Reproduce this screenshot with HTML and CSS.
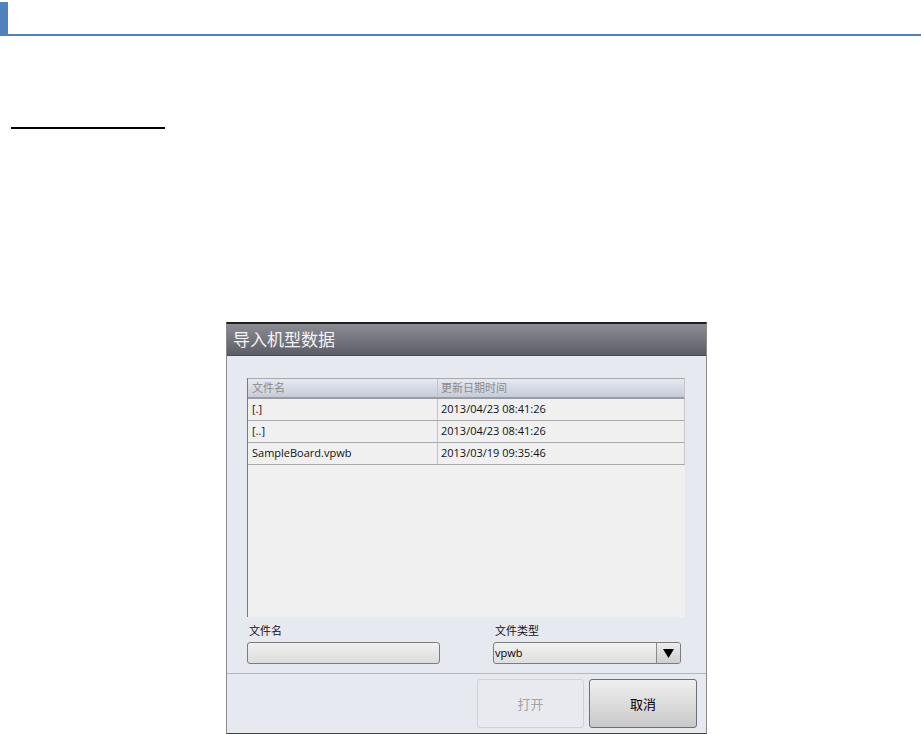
FILE: index.html
```html
<!DOCTYPE html>
<html>
<head>
<meta charset="utf-8">
<link rel="stylesheet" href="styles.css">
</head>
<body>
<div class="topbar"><div class="topbar-mark"></div></div>
<div class="heading-rule"></div>
<div class="dialog">
  <div class="dlg-title">导入机型数据</div>
  <div class="dlg-body">
    <div class="filelist">
      <div class="row head">
        <div class="cell c1">文件名</div>
        <div class="cell c2">更新日期时间</div>
      </div>
      <div class="row">
        <div class="cell c1">[.]</div>
        <div class="cell c2">2013/04/23 08:41:26</div>
      </div>
      <div class="row">
        <div class="cell c1">[..]</div>
        <div class="cell c2">2013/04/23 08:41:26</div>
      </div>
      <div class="row">
        <div class="cell c1">SampleBoard.vpwb</div>
        <div class="cell c2">2013/03/19 09:35:46</div>
      </div>
    </div>
    <div class="fields">
      <div class="field f-name">
        <div class="label">文件名</div>
        <div class="textbox"></div>
      </div>
      <div class="field f-type">
        <div class="label">文件类型</div>
        <div class="select">
          <div class="select-value">vpwb</div>
          <div class="select-btn"><svg width="11" height="9" viewBox="0 0 11 9"><path d="M0 0 H11 L5.5 9 Z" fill="#000"/></svg></div>
        </div>
      </div>
    </div>
  </div>
  <div class="dlg-footer">
    <div class="btn disabled">打开</div>
    <div class="btn">取消</div>
  </div>
</div>
</body>
</html>
```
FILE: styles.css
```css
html, body {
  margin: 0;
  padding: 0;
  background: #ffffff;
  font-family: "Open Sans", "Noto Sans CJK SC", sans-serif;
}
.topbar {
  height: 36px;
  padding-top: 2px;
  box-sizing: border-box;
  border-bottom: 2px solid #4f81bd;
}
.topbar-mark {
  width: 8px;
  height: 32px;
  background: #4f81bd;
}
.heading-rule {
  margin-left: 11px;
  margin-top: 91px;
  width: 154px;
  height: 2px;
  background: #000;
}
.dialog {
  margin-left: 226px;
  margin-top: 193px;
  width: 481px;
  height: 412px;
  box-sizing: border-box;
  border: 1px solid #8a8a8a;
  border-top: 2px solid #202020;
  border-bottom: 1px solid #404040;
  background: #e7e9f1;
  display: flex;
  flex-direction: column;
}
.dlg-title {
  height: 32px;
  box-sizing: border-box;
  background: linear-gradient(#8c8c94, #5c5d66);
  border-bottom: 1px solid #4a4a52;
  color: #f4f4f6;
  font-size: 17px;
  line-height: 31px;
  padding-left: 6px;
}
.dlg-body {
  padding: 22px 24px 0 20px;
  flex: 1;
  display: flex;
  flex-direction: column;
}
.filelist {
  width: 438px;
  height: 239px;
  background: #f0f0f0;
  border-left: 1px solid #7a7a7a;
  box-sizing: border-box;
  font-size: 11px;
}
.row {
  display: flex;
  height: 22px;
  box-sizing: border-box;
  border-bottom: 1px solid #a8a8a8;
  border-right: 1px solid #c8c8c8;
  color: #111;
}
.row.head {
  height: 21px;
  border-top: 1px solid #a8a8a8;
  border-bottom: 2px solid #9a9ca4;
  background: linear-gradient(#e6e9f2, #c6cbd9);
  color: #8a8a8a;
}
.cell {
  line-height: 20px;
  padding-left: 4px;
  box-sizing: border-box;
  white-space: nowrap;
}
.row.head .cell { line-height: 18px; }
.c1 {
  width: 190px;
  border-right: 1px solid #c4c4c4;
}
.c2 { flex: 1; padding-left: 3px; }
.fields {
  display: flex;
  margin-top: 2px;
}
.field { display: flex; flex-direction: column; }
.f-name { width: 193px; }
.f-type { margin-left: 53px; width: 188px; }
.label {
  font-size: 11px;
  height: 23px;
  line-height: 24px;
  color: #111;
  padding-left: 2px;
}
.textbox {
  height: 22px;
  box-sizing: border-box;
  border: 1px solid #7c7c7c;
  border-radius: 3px;
  background: linear-gradient(#f0f0f0, #dcdcdc);
}
.select {
  height: 22px;
  box-sizing: border-box;
  border: 1px solid #7c7c7c;
  border-radius: 3px;
  background: linear-gradient(#f2f2f2, #dedede);
  display: flex;
}
.select-value {
  flex: 1;
  font-size: 11px;
  line-height: 19px;
  padding-left: 1px;
  color: #000;
}
.select-btn {
  width: 23px;
  border-left: 1px solid #8a8a8a;
  display: flex;
  align-items: center;
  justify-content: center;
  background: linear-gradient(#ececec, #cfcfcf);
  border-radius: 0 2px 2px 0;
}
.dlg-footer {
  height: 60px;
  box-sizing: border-box;
  border-top: 1px solid #b4b6bc;
  display: flex;
  justify-content: flex-end;
  align-items: flex-start;
  gap: 5px;
  padding: 5px 9px 0 0;
}
.btn {
  width: 108px;
  height: 49px;
  box-sizing: border-box;
  border: 1px solid #6e6e6e;
  border-radius: 3px;
  background: linear-gradient(#efefef, #c9c9c9);
  font-size: 13px;
  display: flex;
  align-items: center;
  justify-content: center;
  color: #000;
}
.btn.disabled {
  width: 107px;
  border-color: #cfd2d8;
  background: #e8eaef;
  color: #a4a4a4;
}
```
